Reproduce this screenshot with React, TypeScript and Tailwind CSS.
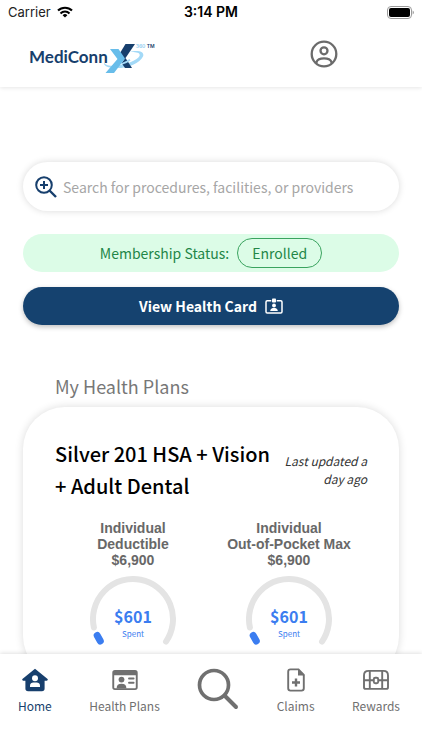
import { useState } from "react";
import { clsx } from "clsx";

interface IconProps {
  className?: string;
}

interface GaugeProps {
  lines: string[];
  limit: string;
  spent: string;
}

function WifiIcon({ className }: IconProps) {
  return (
    <svg viewBox="0 0 16 12" className={className} fill="none" stroke="currentColor" strokeWidth="2.1">
      <path d="M1 4.6a10 10 0 0 1 14 0" />
      <path d="M3.5 7.4a6.4 6.4 0 0 1 9 0" />
      <path d="M8 11.6L5.6 9.2a3.4 3.4 0 0 1 4.8 0z" fill="currentColor" stroke="none" />
    </svg>
  );
}

function BatteryIcon({ className }: IconProps) {
  return (
    <svg viewBox="0 0 27 13" className={className}>
      <rect x="0.5" y="0.5" width="24" height="12" rx="3.5" fill="none" stroke="#9b9b9b" />
      <rect x="2" y="2" width="21" height="9" rx="2" fill="#000" />
      <path d="M25.6 4.5a2.2 2.2 0 0 1 0 4z" fill="#9b9b9b" />
    </svg>
  );
}

function LogoMark({ className }: IconProps) {
  return (
    <svg viewBox="0 0 50 32" className={className}>
      <path
        d="M25 10.200C34 7.600 41 9.500 39 14.500 36 21.500 22 27 10 26 3 25.500-1 23.500 0 20c.5 3 5 4.200 10 3.700C22 22.700 33 18.500 35.500 14 36.700 10.800 32 9.800 25 10.200z"
        fill="#a3d9f7"
      />
      <path d="M21.500 2H31L20.500 17.500 16 11z" fill="#173f6d" />
      <path d="M21.500 16L28 26h-7l-3.500-5z" fill="#173f6d" />
      <path d="M6 7h8.500l6.500 9.500L10 31H1.500L13.500 17z" fill="#68bdea" />
      <path d="M17.500 22c4-1.200 6.500-2.600 8.500-4.200" stroke="#a3d9f7" strokeWidth="1.800" fill="none" />
    </svg>
  );
}

function ProfileIcon({ className }: IconProps) {
  return (
    <svg viewBox="0 0 28 28" className={className} fill="none" stroke="currentColor" strokeWidth="2.3">
      <circle cx="14" cy="14" r="12.300" />
      <circle cx="14" cy="10.800" r="3.500" />
      <path d="M6.500 23.500v-1.500c1-2.600 3.800-3.600 7.500-3.600s6.500 1 7.500 3.600v1.500" />
    </svg>
  );
}

function SearchPlusIcon({ className }: IconProps) {
  return (
    <svg viewBox="0 0 22 22" className={className} fill="none" stroke="currentColor" strokeWidth="2">
      <circle cx="9" cy="9" r="7.800" />
      <path d="M9 5v8M5 9h8" />
      <path d="M14.500 14.500L21 21" strokeWidth="2.400" />
    </svg>
  );
}

function BadgeIcon({ className }: IconProps) {
  return (
    <svg viewBox="0 0 18 16" className={className} fill="none" stroke="currentColor" strokeWidth="1.500">
      <path d="M6.300 2.800H2.200Q1 2.800 1 4v9.800Q1 15 2.200 15h13.600q1.200 0 1.200-1.200V4q0-1.200-1.200-1.200h-4.100" />
      <rect x="7" y="0.500" width="4" height="4" rx="0.800" fill="currentColor" stroke="none" />
      <circle cx="9" cy="7.500" r="1.900" fill="currentColor" stroke="none" />
      <path d="M5.300 13v-.8c.4-1.700 1.900-2.200 3.700-2.200s3.300.5 3.700 2.200v.8z" fill="currentColor" stroke="none" />
    </svg>
  );
}

function HomeIcon({ className }: IconProps) {
  return (
    <svg viewBox="0 0 26 24" className={className}>
      <path
        d="M13 .8L25.600 11q.7 1.300-.8 1.800H22.600v7.700q0 2.700-2.700 2.700H6.100q-2.700 0-2.700-2.700v-7.700H1.200Q-.3 12.300.4 11z"
        fill="currentColor"
      />
      <circle cx="13" cy="10.300" r="3" fill="#fff" />
      <path d="M8 19v-1.200c0-2.200 1.600-3.300 3.300-3.300h3.400c1.700 0 3.300 1.100 3.300 3.300V19z" fill="#fff" />
    </svg>
  );
}

function PlansIcon({ className }: IconProps) {
  return (
    <svg viewBox="0 0 26 24" className={className} fill="currentColor">
      <path
        fillRule="evenodd"
        d="M3 2h20q2.700 0 2.700 2.700v14.600q0 2.700-2.700 2.700H3Q.3 22 .3 19.300V4.700Q.3 2 3 2zM2.200 7.200v12.300q0 .7.700.7H23.100q.7 0 .7-.7V7.200z"
      />
      <circle cx="9.500" cy="11.600" r="2.900" />
      <path d="M4.600 20.500c0-3.300 1.700-4.700 4.900-4.700s4.900 1.400 4.900 4.700z" />
      <path d="M17 10.500h4.600M17 14.700h4.600" stroke="currentColor" strokeWidth="1.900" strokeLinecap="round" />
    </svg>
  );
}

function SearchIcon({ className }: IconProps) {
  return (
    <svg viewBox="0 0 42 42" className={className} fill="none" stroke="currentColor">
      <circle cx="17" cy="17" r="14.500" strokeWidth="3.700" />
      <path d="M27.500 27.500L39 39" strokeWidth="4" strokeLinecap="round" />
    </svg>
  );
}

function ClaimsIcon({ className }: IconProps) {
  return (
    <svg viewBox="0 0 26 24" className={className} fill="none" stroke="currentColor" strokeWidth="1.900">
      <path d="M15.500 1.400H7.500q-2.300 0-2.300 2.300v16.600q0 2.300 2.300 2.300h11q2.300 0 2.300-2.300V7z" />
      <path d="M15 1v6.500h6.500z" fill="currentColor" stroke="none" />
      <path d="M13 10.500v8M9 14.500h8" strokeWidth="2.400" />
    </svg>
  );
}

function RewardsIcon({ className }: IconProps) {
  return (
    <svg viewBox="0 0 26 24" className={className} fill="none" stroke="currentColor" strokeWidth="1.900">
      <path d="M5.500 2.900h15q4.500 0 4.500 4.500v11.800q0 1.700-1.700 1.700H2.700Q1 20.900 1 19.200V7.400q0-4.500 4.500-4.500z" />
      <path d="M6.800 3v18M19.200 3v18M1 12.300h9.500M15.500 12.300H25" />
      <rect x="10.800" y="9.700" width="4.400" height="5.600" rx="1.500" />
    </svg>
  );
}

function Gauge({ lines, limit, spent }: GaugeProps) {
  return (
    <div className="flex flex-1 flex-col items-center">
      <h3 className="text-center font-['Liberation_Sans',sans-serif] text-sm leading-4 font-bold whitespace-nowrap text-[#686868]">
        {lines.map((line) => (
          <span key={line} className="block">
            {line}
          </span>
        ))}
        <span className="block">{limit}</span>
      </h3>
      <div className="relative mt-2">
        <svg viewBox="0 0 86 86" className="size-[86px]" fill="none" strokeWidth="6" strokeLinecap="round">
          <path d="M3.900 51.500A40 40 0 1 1 76 65.600" stroke="#e4e4e4" />
          <path d="M10.300 65L7.200 59.500" stroke="#3b7df0" strokeWidth="7" />
        </svg>
        <div className="absolute inset-x-0 top-7 text-center text-[#3b7df0]">
          <p className="text-base leading-6 font-bold">{spent}</p>
          <p className="text-[8px] leading-3">Spent</p>
        </div>
      </div>
    </div>
  );
}

const navItems = [
  { label: "Home", icon: HomeIcon },
  { label: "Health Plans", icon: PlansIcon },
  { label: "Search", icon: SearchIcon, large: true },
  { label: "Claims", icon: ClaimsIcon },
  { label: "Rewards", icon: RewardsIcon },
];

export default function App() {
  const [active, setActive] = useState("Home");
  const [query, setQuery] = useState("");

  return (
    <div className="flex h-screen flex-col overflow-hidden bg-white font-['Noto_Sans_CJK_JP',sans-serif]">
      <header className="relative z-10 bg-white shadow-[0_1px_4px_rgba(0,0,0,0.1)]">
        <div className="grid grid-cols-3 items-center px-2 pt-1 font-[Inter,sans-serif] text-[13px] leading-4 text-[#222]">
          <div className="flex items-center gap-1.5">
            <span>Carrier</span>
            <WifiIcon className="h-3 w-4 text-black" />
          </div>
          <span className="text-center text-sm leading-4 font-semibold text-black">3:14 PM</span>
          <BatteryIcon className="h-[13px] w-[27px] justify-self-end" />
        </div>
        <div className="flex items-start justify-between pt-5 pr-[84px] pb-[13px] pl-[29px]">
          <a href="#home" className="flex items-center text-[#173f6d]">
            <span className="font-[Lato,sans-serif] text-[17px] leading-6 font-bold">MediConn</span>
            <span className="-ml-1 flex items-start">
              <LogoMark className="mt-0.5 h-8 w-[50px]" />
              <span className="-ml-[18px] pt-0.5 font-[Inter,sans-serif] text-[5px] leading-2 font-semibold">
                <span className="text-[#8fcdf0]">360</span> <span>TM</span>
              </span>
            </span>
          </a>
          <button type="button" aria-label="Profile" className="text-[#6b6b6b]">
            <ProfileIcon className="size-7" />
          </button>
        </div>
      </header>

      <main className="min-h-0 flex-1 overflow-hidden px-[23px] pt-[75px]">
        <label className="flex h-[49px] items-center gap-1.5 rounded-full bg-white px-3 shadow-[0_0_7px_rgba(0,0,0,0.15)]">
          <SearchPlusIcon className="size-[22px] shrink-0 text-[#173f6d]" />
          <input
            type="text"
            aria-label="Search"
            value={query}
            onChange={(e) => setQuery(e.target.value)}
            placeholder="Search for procedures, facilities, or providers"
            className="min-w-0 flex-1 text-sm leading-6 text-gray-700 outline-none placeholder:text-[#a6a6a6]"
          />
        </label>

        <div className="mt-[23px] flex items-center justify-center gap-2 rounded-full bg-[#dcfce7] py-1 text-sm text-[#238647]">
          <span>Membership Status:</span>
          <span className="rounded-full border border-[#3aa35f] px-3.5 leading-7">Enrolled</span>
        </div>

        <button
          type="button"
          className="mt-[15px] flex w-full items-center justify-center gap-2 rounded-full bg-[#15426f] py-2 text-sm leading-[22px] font-bold text-white shadow-[0_2px_5px_rgba(0,0,0,0.25)]"
        >
          View Health Card
          <BadgeIcon className="h-4 w-[18px]" />
        </button>

        <h1 className="mt-[47px] pl-8 text-lg leading-7 text-[#777]">My Health Plans</h1>

        <section className="mt-[7px] rounded-[42px] bg-white px-8 pt-[31px] pb-4 shadow-[0_0_8px_rgba(0,0,0,0.14)]">
          <div className="flex items-center justify-between gap-2">
            <h2 className="flex-1 text-xl leading-8 font-medium text-black">Silver 201 HSA + Vision + Adult Dental</h2>
            <p className="w-21 text-right text-xs leading-[18px] text-[#333] italic">Last updated a day ago</p>
          </div>
          <div className="mt-[18px] flex">
            <Gauge lines={["Individual", "Deductible"]} limit="$6,900" spent="$601" />
            <Gauge lines={["Individual", "Out-of-Pocket Max"]} limit="$6,900" spent="$601" />
          </div>
        </section>
      </main>

      <nav className="relative z-10 bg-white pb-[26px] shadow-[0_-1px_4px_rgba(0,0,0,0.12)]">
        <div className="flex items-start justify-between pt-3.5 pr-[22px] pb-2 pl-[18px]">
          {navItems.map(({ label, icon: Icon, large }) => (
            <button
              key={label}
              type="button"
              aria-label={label}
              onClick={() => setActive(label)}
              className={clsx(
                "flex flex-col items-center text-xs leading-5",
                active === label ? "text-[#173f6d]" : "text-[#707070]"
              )}
            >
              <Icon className={large ? "size-[42px]" : "h-6 w-[26px]"} />
              {!large && <span className="mt-1">{label}</span>}
            </button>
          ))}
        </div>
      </nav>
    </div>
  );
}
